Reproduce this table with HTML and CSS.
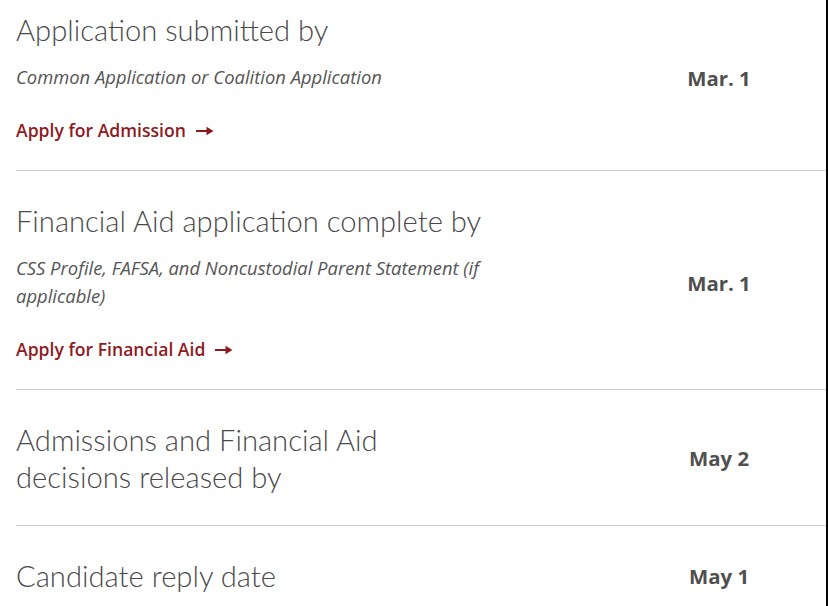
FILE: index.html
```html
<!DOCTYPE html>
<html lang="en">
<head>
<meta charset="utf-8">
<title>Dates</title>
<link rel="stylesheet" href="styles.css">
</head>
<body>
<div class="frame">
  <ul class="dates">
    <li class="row">
      <div class="info">
        <h3 class="title">Application submitted by</h3>
        <p class="note">Common Application or Coalition Application</p>
        <a class="link" href="#">Apply for Admission <svg class="arrow" width="18" height="10" viewBox="0 0 18 10" aria-hidden="true"><path d="M0 5H12" stroke="currentColor" stroke-width="2"/><path d="M10.5 0.8L17.5 5L10.5 9.2Z" fill="currentColor"/></svg></a>
      </div>
      <div class="date">Mar. 1</div>
    </li>
    <li class="row">
      <div class="info">
        <h3 class="title">Financial Aid application complete by</h3>
        <p class="note">CSS Profile, FAFSA, and Noncustodial Parent Statement (if applicable)</p>
        <a class="link" href="#">Apply for Financial Aid <svg class="arrow" width="18" height="10" viewBox="0 0 18 10" aria-hidden="true"><path d="M0 5H12" stroke="currentColor" stroke-width="2"/><path d="M10.5 0.8L17.5 5L10.5 9.2Z" fill="currentColor"/></svg></a>
      </div>
      <div class="date">Mar. 1</div>
    </li>
    <li class="row row--plain">
      <div class="info">
        <h3 class="title">Admissions and Financial Aid decisions released by</h3>
      </div>
      <div class="date">May 2</div>
    </li>
    <li class="row row--plain">
      <div class="info">
        <h3 class="title">Candidate reply date</h3>
      </div>
      <div class="date">May 1</div>
    </li>
  </ul>
</div>
</body>
</html>
```
FILE: styles.css
```css
html, body {
  margin: 0;
  padding: 0;
  background: #fff;
}
body {
  font-family: Lato, "Open Sans", "Liberation Sans", sans-serif;
  color: #4d4d4d;
  overflow: hidden;
}
.frame {
  width: 826px;
  height: 606px;
  border-right: 2px solid #000;
  overflow: hidden;
}
.dates {
  list-style: none;
  margin: -20px 0 0 16px;
  padding: 0;
}
.row {
  display: grid;
  grid-template-columns: 1fr 218px;
  align-items: center;
  border-top: 1px solid #cfcfcf;
  padding: 31px 0 26px;
}
.row:first-child {
  border-top: none;
}
.row--plain {
  padding-bottom: 30px;
}
.info {
  max-width: 478px;
}
.title {
  margin: 0;
  font-weight: 300;
  font-size: 29.2px;
  line-height: 37px;
  color: #4a4a4a;
}
.note {
  margin: 15px 0 0;
  font-family: "Open Sans", Lato, sans-serif;
  font-style: italic;
  font-size: 18.4px;
  line-height: 28px;
  color: #555;
}
.link {
  display: block;
  width: max-content;
  margin-top: 25px;
  font-family: "Open Sans", Lato, sans-serif;
  font-size: 17.6px;
  line-height: 28px;
  font-weight: 600;
  color: #8f1a1e;
  text-decoration: none;
}
.arrow {
  margin-left: 5px;
  vertical-align: 1px;
}
.date {
  text-align: center;
  padding-left: 4px;
  font-family: "Open Sans", Lato, sans-serif;
  font-weight: 700;
  font-size: 20.4px;
  color: #505050;
}
```
